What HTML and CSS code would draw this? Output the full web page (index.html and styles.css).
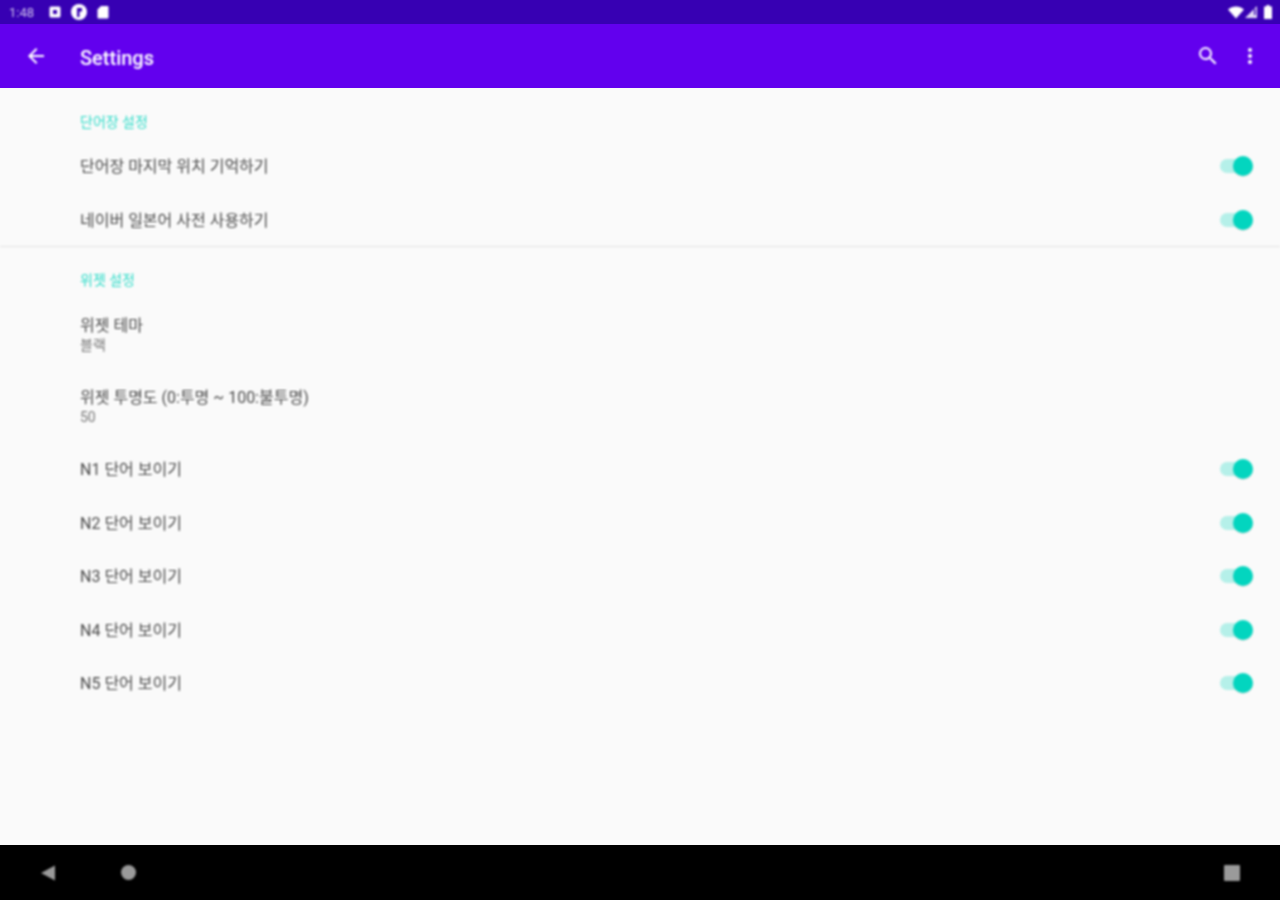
FILE: index.html
```html
<!DOCTYPE html>
<html lang="ko">
<head>
  <meta charset="UTF-8" />
  <title>Settings</title>
  <link rel="stylesheet" href="styles.css">
</head>
<body>

<div class="screen">
  <div class="status-bar">
    <div class="status-left">
      <span class="clock">1:48</span>
      <svg class="status-icon" viewBox="0 0 14 14"><rect x="1.5" y="1.5" width="11" height="11" rx="1.5" fill="#fff"/><rect x="5" y="5" width="4" height="4" fill="#3700b3"/></svg>
      <svg class="status-icon wide" viewBox="0 0 18 18"><circle cx="9" cy="9" r="8" fill="#fff"/><path d="M7 14V5h5v3.5H9.5V14z" fill="#3700b3"/></svg>
      <svg class="status-icon" viewBox="0 0 14 14"><path d="M5 1h6.500a1 1 0 0 1 1 1v10.500a1 1 0 0 1-1 1h-9a1 1 0 0 1-1-1V4.500z" fill="#fff"/></svg>
    </div>
    <div class="status-right">
      <svg class="status-icon wifi" viewBox="0 0 16 14"><path d="M0 4.500C4.500.5 11.500.5 16 4.500L8 13.500z" fill="#fff"/></svg>
      <svg class="status-icon" viewBox="0 0 14 14"><path d="M13 1v12H1z" fill="#fff" opacity=".85"/><rect x="10" y="4" width="1.500" height="6" fill="#3700b3"/></svg>
      <svg class="status-icon narrow" viewBox="0 0 10 14"><path d="M3.500 0h3v1.500H9V14H1V1.500h2.500z" fill="#fff"/></svg>
    </div>
  </div>

  <header class="toolbar">
    <svg class="back-icon" viewBox="0 0 24 24"><path d="M20 11H7.830l5.590-5.590L12 4l-8 8 8 8 1.410-1.410L7.830 13H20z" fill="#fff"/></svg>
    <h1 class="toolbar-title">Settings</h1>
    <svg class="action-icon" viewBox="0 0 24 24"><path d="M15.500 14h-.790l-.280-.270A6.470 6.470 0 0 0 16 9.500 6.500 6.500 0 1 0 9.500 16c1.610 0 3.090-.590 4.230-1.570l.270.280v.790l5 4.990L20.490 19zm-6 0C7.010 14 5 11.990 5 9.500S7.010 5 9.500 5 14 7.010 14 9.500 11.990 14 9.500 14z" fill="#fff"/></svg>
    <svg class="action-icon more" viewBox="0 0 24 24"><path d="M12 8a2 2 0 1 0 0-4 2 2 0 0 0 0 4zm0 2a2 2 0 1 0 0 4 2 2 0 0 0 0-4zm0 6a2 2 0 1 0 0 4 2 2 0 0 0 0-4z" fill="#fff"/></svg>
  </header>

  <main class="settings">
    <section class="group group-first">
      <h2 class="group-title">단어장 설정</h2>
      <div class="row"><span class="row-label">단어장 마지막 위치 기억하기</span><span class="switch"></span></div>
      <div class="row"><span class="row-label">네이버 일본어 사전 사용하기</span><span class="switch"></span></div>
    </section>

    <section class="group">
      <h2 class="group-title">위젯 설정</h2>
      <div class="row row-tall">
        <div>
          <div class="row-label">위젯 테마</div>
          <div class="row-sub">블랙</div>
        </div>
      </div>
      <div class="row row-tall">
        <div>
          <div class="row-label">위젯 투명도 (0:투명 ~ 100:불투명)</div>
          <div class="row-sub">50</div>
        </div>
      </div>
      <div class="row"><span class="row-label">N1 단어 보이기</span><span class="switch"></span></div>
      <div class="row"><span class="row-label">N2 단어 보이기</span><span class="switch"></span></div>
      <div class="row"><span class="row-label">N3 단어 보이기</span><span class="switch"></span></div>
      <div class="row"><span class="row-label">N4 단어 보이기</span><span class="switch"></span></div>
      <div class="row"><span class="row-label">N5 단어 보이기</span><span class="switch"></span></div>
    </section>
  </main>

  <nav class="nav-bar">
    <div class="nav-left">
      <svg class="nav-icon" viewBox="0 0 16 16"><path d="M15 .5v15L1 8z" fill="#9a9a9a"/></svg>
      <span class="nav-home"></span>
    </div>
    <span class="nav-recent"></span>
  </nav>
</div>

</body>
</html>
```

FILE: styles.css
```css
* { box-sizing: border-box; }

html, body {
  margin: 0;
  height: 100%;
}

body {
  font-family: Roboto, "Noto Sans CJK KR", sans-serif;
  background-color: #fafafa;
  overflow: hidden;
}

.screen {
  height: 900px;
  display: flex;
  flex-direction: column;
}

/* the reference is a soft, upscaled capture */
.status-bar > *,
.toolbar > *,
.settings,
.nav-bar > * {
  filter: blur(0.9px);
}

.status-bar {
  height: 24px;
  background-color: #3700b3;
  color: #fff;
  display: flex;
  align-items: center;
  justify-content: space-between;
  padding: 0 7px 0 9px;
}

.status-left, .status-right {
  display: flex;
  align-items: center;
}

.status-left { gap: 8px; }

.clock {
  font-size: 13px;
  opacity: 0.75;
  margin-right: 4px;
  width: 27px;
}

.status-icon {
  width: 14px;
  height: 14px;
  display: block;
}

.status-icon.wide { width: 18px; height: 18px; }
.status-icon.wifi { width: 16px; }
.status-icon.narrow { width: 10px; margin-left: 5px; }

.toolbar {
  height: 64px;
  background-color: #6200ee;
  color: #fff;
  display: flex;
  align-items: center;
  padding: 0 18px 0 24px;
}

.back-icon {
  width: 24px;
  height: 24px;
  margin-right: 32px;
}

.toolbar-title {
  flex: 1;
  margin: 0;
  padding-top: 3px;
  font-size: 20px;
  font-weight: 500;
}

.action-icon {
  width: 24px;
  height: 24px;
}

.action-icon.more { margin-left: 18px; }

.settings {
  flex: 1;
}

.group {
  padding-top: 23px;
}

.group-first {
  height: 159px;
  border-bottom: 1px solid #e4e4e4;
}

.group-title {
  margin: 0 0 8.500px;
  padding-left: 80px;
  font-size: 14px;
  line-height: 20px;
  font-weight: 400;
  color: #2edcc9;
}

.group-first .group-title {
  padding-top: 1px;
  margin-bottom: 7.500px;
}

.row {
  height: 53.500px;
  display: flex;
  align-items: center;
  justify-content: space-between;
  padding: 0 28px 0 80px;
}

.row-tall {
  height: 72px;
  align-items: flex-start;
  padding-top: 15px;
}

.row-label {
  padding-top: 2px;
  font-size: 16px;
  line-height: 20px;
  color: #4a4a4a;
}

.row-sub {
  margin-top: -1px;
  font-size: 14px;
  line-height: 20px;
  color: #777;
}

.switch {
  position: relative;
  width: 32px;
  height: 14px;
  border-radius: 7px;
  background-color: #b5f0e9;
}

.switch::after {
  content: "";
  position: absolute;
  right: -1px;
  top: -3px;
  width: 20px;
  height: 20px;
  border-radius: 50%;
  background-color: #03d5bf;
  box-shadow: 0 1px 1px rgba(0, 0, 0, 0.1);
}

.nav-bar {
  height: 55px;
  background-color: #000;
  display: flex;
  align-items: center;
  justify-content: space-between;
  padding: 0 40px;
}

.nav-left {
  display: flex;
  align-items: center;
  gap: 65px;
}

.nav-icon {
  width: 16px;
  height: 16px;
  display: block;
}

.nav-home {
  width: 15px;
  height: 15px;
  border-radius: 50%;
  background-color: #9a9a9a;
}

.nav-recent {
  width: 16px;
  height: 16px;
  border-radius: 1px;
  background-color: #9a9a9a;
}
```
